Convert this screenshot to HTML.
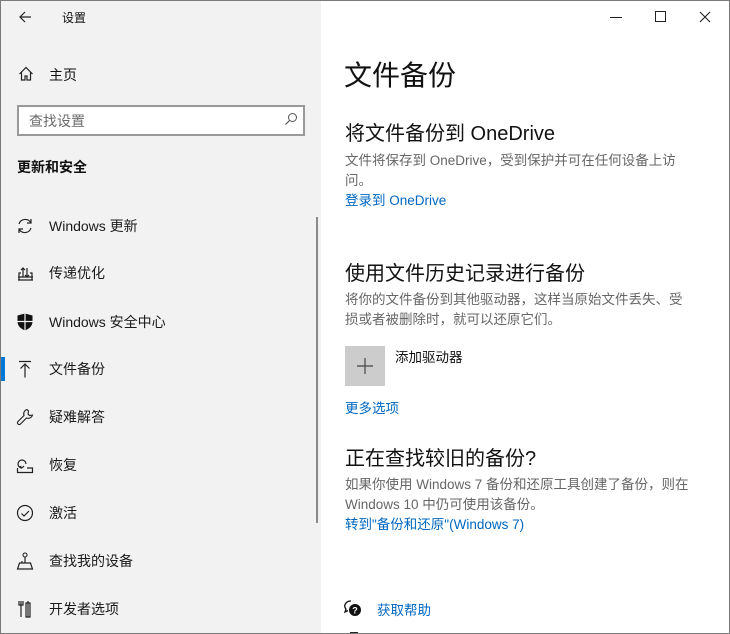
<!DOCTYPE html>
<html><head><meta charset="utf-8"><style>
*{margin:0;padding:0;box-sizing:border-box}
body{width:730px;height:634px;overflow:hidden;font-family:"Liberation Sans","Noto Sans CJK SC",sans-serif;background:#fff;position:relative}
.frame{position:absolute;left:0;top:0;width:730px;height:634px;border:1px solid #7a7a7a;pointer-events:none;z-index:9}
.left{position:absolute;left:0;top:0;width:321px;height:634px;background:#f2f2f2}
.a{position:absolute;white-space:nowrap}
.nav{position:absolute;left:49px;font-size:14px;color:#1a1a1a;line-height:20px}
.ic{position:absolute;left:16px}
.g{color:#666;font-size:13.5px;line-height:20px}
.l{color:#0067c0;font-size:13.5px}
svg{display:block}
</style></head><body>
<div class="left">
 <svg class="ic" style="left:17px;top:9px" width="16" height="16" viewBox="0 0 16 16"><path d="M14 8H3M8 3L3 8l5 5" fill="none" stroke="#222" stroke-width="1.2"/></svg>
 <div class="a" style="left:62px;top:9px;font-size:12px;color:#111">设置</div>
 <svg class="ic" style="left:18px;top:66px" width="16" height="16" viewBox="0 0 16 16"><path d="M1.5 8L8 1.5 14.5 8M3.5 6.5V14h3.5V10h2v4h3.5V6.5" fill="none" stroke="#222" stroke-width="1.2"/></svg>
 <div class="a" style="left:49px;top:65px;font-size:14px;color:#111">主页</div>
 <div class="a" style="left:17px;top:105px;width:288px;height:31px;border:2px solid #999;background:#fff"></div>
 <div class="a" style="left:29px;top:111px;font-size:14px;color:#6b6b6b">查找设置</div>
 <svg class="a" style="left:284px;top:112px" width="14" height="14" viewBox="0 0 14 14"><circle cx="8.5" cy="5.5" r="4" fill="none" stroke="#555" stroke-width="1"/><path d="M5.5 8.5L1.5 12.5" stroke="#555" stroke-width="1.2"/></svg>
 <div class="a" style="left:17px;top:157px;font-size:14px;font-weight:bold;color:#111">更新和安全</div>
 <div class="a" style="left:316px;top:217px;width:2px;height:306px;background:#8a8a8a"></div>
 <div class="a" style="left:1px;top:357px;width:4px;height:24px;background:#0078d7"></div>

 <svg class="ic" style="top:217px" width="18" height="18" viewBox="0 0 18 18"><path d="M3 7a6.5 6.5 0 0 1 12-1M15 11a6.5 6.5 0 0 1-12 1M15 2v4h-4M3 16v-4h4" fill="none" stroke="#222" stroke-width="1.2"/></svg>
 <div class="nav" style="top:216px">Windows 更新</div>
 <svg class="ic" style="top:264px" width="18" height="18" viewBox="0 0 18 18"><path d="M2 16h15M3 16V9h2M14 9h2v7M7 13V4M5 6l2-2 2 2M11 4v9M9 11l2 2 2-2M2 13h15" fill="none" stroke="#222" stroke-width="1.2"/></svg>
 <div class="nav" style="top:263px">传递优化</div>
 <svg class="ic" style="top:313px" width="18" height="18" viewBox="0 0 18 18"><path d="M1.5 2.5L9 0.5l7.5 2v6c0 5-4 7.5-7.5 9-3.5-1.5-7.5-4-7.5-9z" fill="#111"/><path d="M9 0.5v17M1.5 8.5h15" stroke="#f2f2f2" stroke-width="1.2"/></svg>
 <div class="nav" style="top:312px">Windows 安全中心</div>
 <svg class="ic" style="top:360px" width="18" height="18" viewBox="0 0 18 18"><path d="M3 1.5h12M9 4v13.5M4.5 8.5L9 4l4.5 4.5" fill="none" stroke="#222" stroke-width="1.2"/></svg>
 <div class="nav" style="top:359px">文件备份</div>
 <svg class="ic" style="top:408px" width="18" height="18" viewBox="0 0 18 18"><path d="M11 1.5a4.5 4.5 0 0 0-3 6L1.8 13.7a1.8 1.8 0 0 0 2.5 2.5L10.5 10a4.5 4.5 0 0 0 6-3l-3 .5-1.5-1.5.5-3z" fill="none" stroke="#222" stroke-width="1.1"/></svg>
 <div class="nav" style="top:407px">疑难解答</div>
 <svg class="ic" style="top:456px" width="18" height="18" viewBox="0 0 18 18"><path d="M1.5 12v4.5h15V12H11M6 12a4 4 0 1 1 4-4M6 12l-2-2M6 12l2-2" fill="none" stroke="#222" stroke-width="1.2"/></svg>
 <div class="nav" style="top:455px">恢复</div>
 <svg class="ic" style="top:504px" width="18" height="18" viewBox="0 0 18 18"><circle cx="9" cy="9" r="7.5" fill="none" stroke="#222" stroke-width="1.2"/><path d="M5.5 9.5l2.5 2.5 5-5" fill="none" stroke="#222" stroke-width="1.2"/></svg>
 <div class="nav" style="top:503px">激活</div>
 <svg class="ic" style="top:552px" width="18" height="18" viewBox="0 0 18 18"><circle cx="9" cy="3" r="2" fill="none" stroke="#222" stroke-width="1.1"/><path d="M9 5v6M1.5 17h15l-2-6h-11z M6 11v-2" fill="none" stroke="#222" stroke-width="1.2"/></svg>
 <div class="nav" style="top:551px">查找我的设备</div>
 <svg class="ic" style="top:600px" width="18" height="18" viewBox="0 0 18 18"><path d="M5 1v16M3 1v4h4V1M12 1v16M10 3h4v14h-4z" fill="none" stroke="#222" stroke-width="1.2"/></svg>
 <div class="nav" style="top:599px">开发者选项</div>
</div>

<div class="a" style="left:610px;top:17px;width:12px;height:1px;background:#222"></div>
<div class="a" style="left:655px;top:11px;width:11px;height:11px;border:1px solid #222"></div>
<svg class="a" style="left:699px;top:11px" width="12" height="12" viewBox="0 0 12 12"><path d="M1 1l10 10M11 1L1 11" stroke="#222" stroke-width="1.1"/></svg>

<div class="a" style="left:344px;top:54px;font-size:28px;color:#111">文件备份</div>
<div class="a" style="left:345px;top:117px;font-size:20px;color:#111">将文件备份到 OneDrive</div>
<div class="a g" style="left:345px;top:151px">文件将保存到 OneDrive，受到保护并可在任何设备上访<br>问。</div>
<div class="a l" style="left:345px;top:189px">登录到 OneDrive</div>
<div class="a" style="left:345px;top:257px;font-size:20px;color:#111">使用文件历史记录进行备份</div>
<div class="a g" style="left:345px;top:290px">将你的文件备份到其他驱动器，这样当原始文件丢失、受<br>损或者被删除时，就可以还原它们。</div>
<div class="a" style="left:345px;top:346px;width:40px;height:40px;background:#ccc"></div>
<svg class="a" style="left:356px;top:357px" width="18" height="18" viewBox="0 0 18 18"><path d="M9 1v16M1 9h16" stroke="#444" stroke-width="1.2"/></svg>
<div class="a" style="left:395px;top:346px;font-size:13.5px;color:#111">添加驱动器</div>
<div class="a l" style="left:345px;top:397px">更多选项</div>
<div class="a" style="left:345px;top:442px;font-size:20px;color:#111">正在查找较旧的备份?</div>
<div class="a g" style="left:345px;top:475px">如果你使用 Windows 7 备份和还原工具创建了备份，则在<br>Windows 10 中仍可使用该备份。</div>
<div class="a l" style="left:345px;top:513px">转到"备份和还原"(Windows 7)</div>
<svg class="a" style="left:344px;top:600px" width="18" height="18" viewBox="0 0 18 18"><path d="M7 1a6 5 0 0 0-5 8l-1 3 3-1.5" fill="none" stroke="#111" stroke-width="1.3"/><circle cx="11" cy="10" r="6" fill="#111"/><text x="11" y="13.5" font-size="9" font-weight="bold" fill="#fff" text-anchor="middle" font-family="Liberation Sans">?</text></svg>
<div class="a l" style="left:377px;top:599px;font-size:13.5px">获取帮助</div>
<div class="a" style="left:350px;top:632px;width:8px;height:2px;background:#222"></div>
<div class="frame"></div>
</body></html>
